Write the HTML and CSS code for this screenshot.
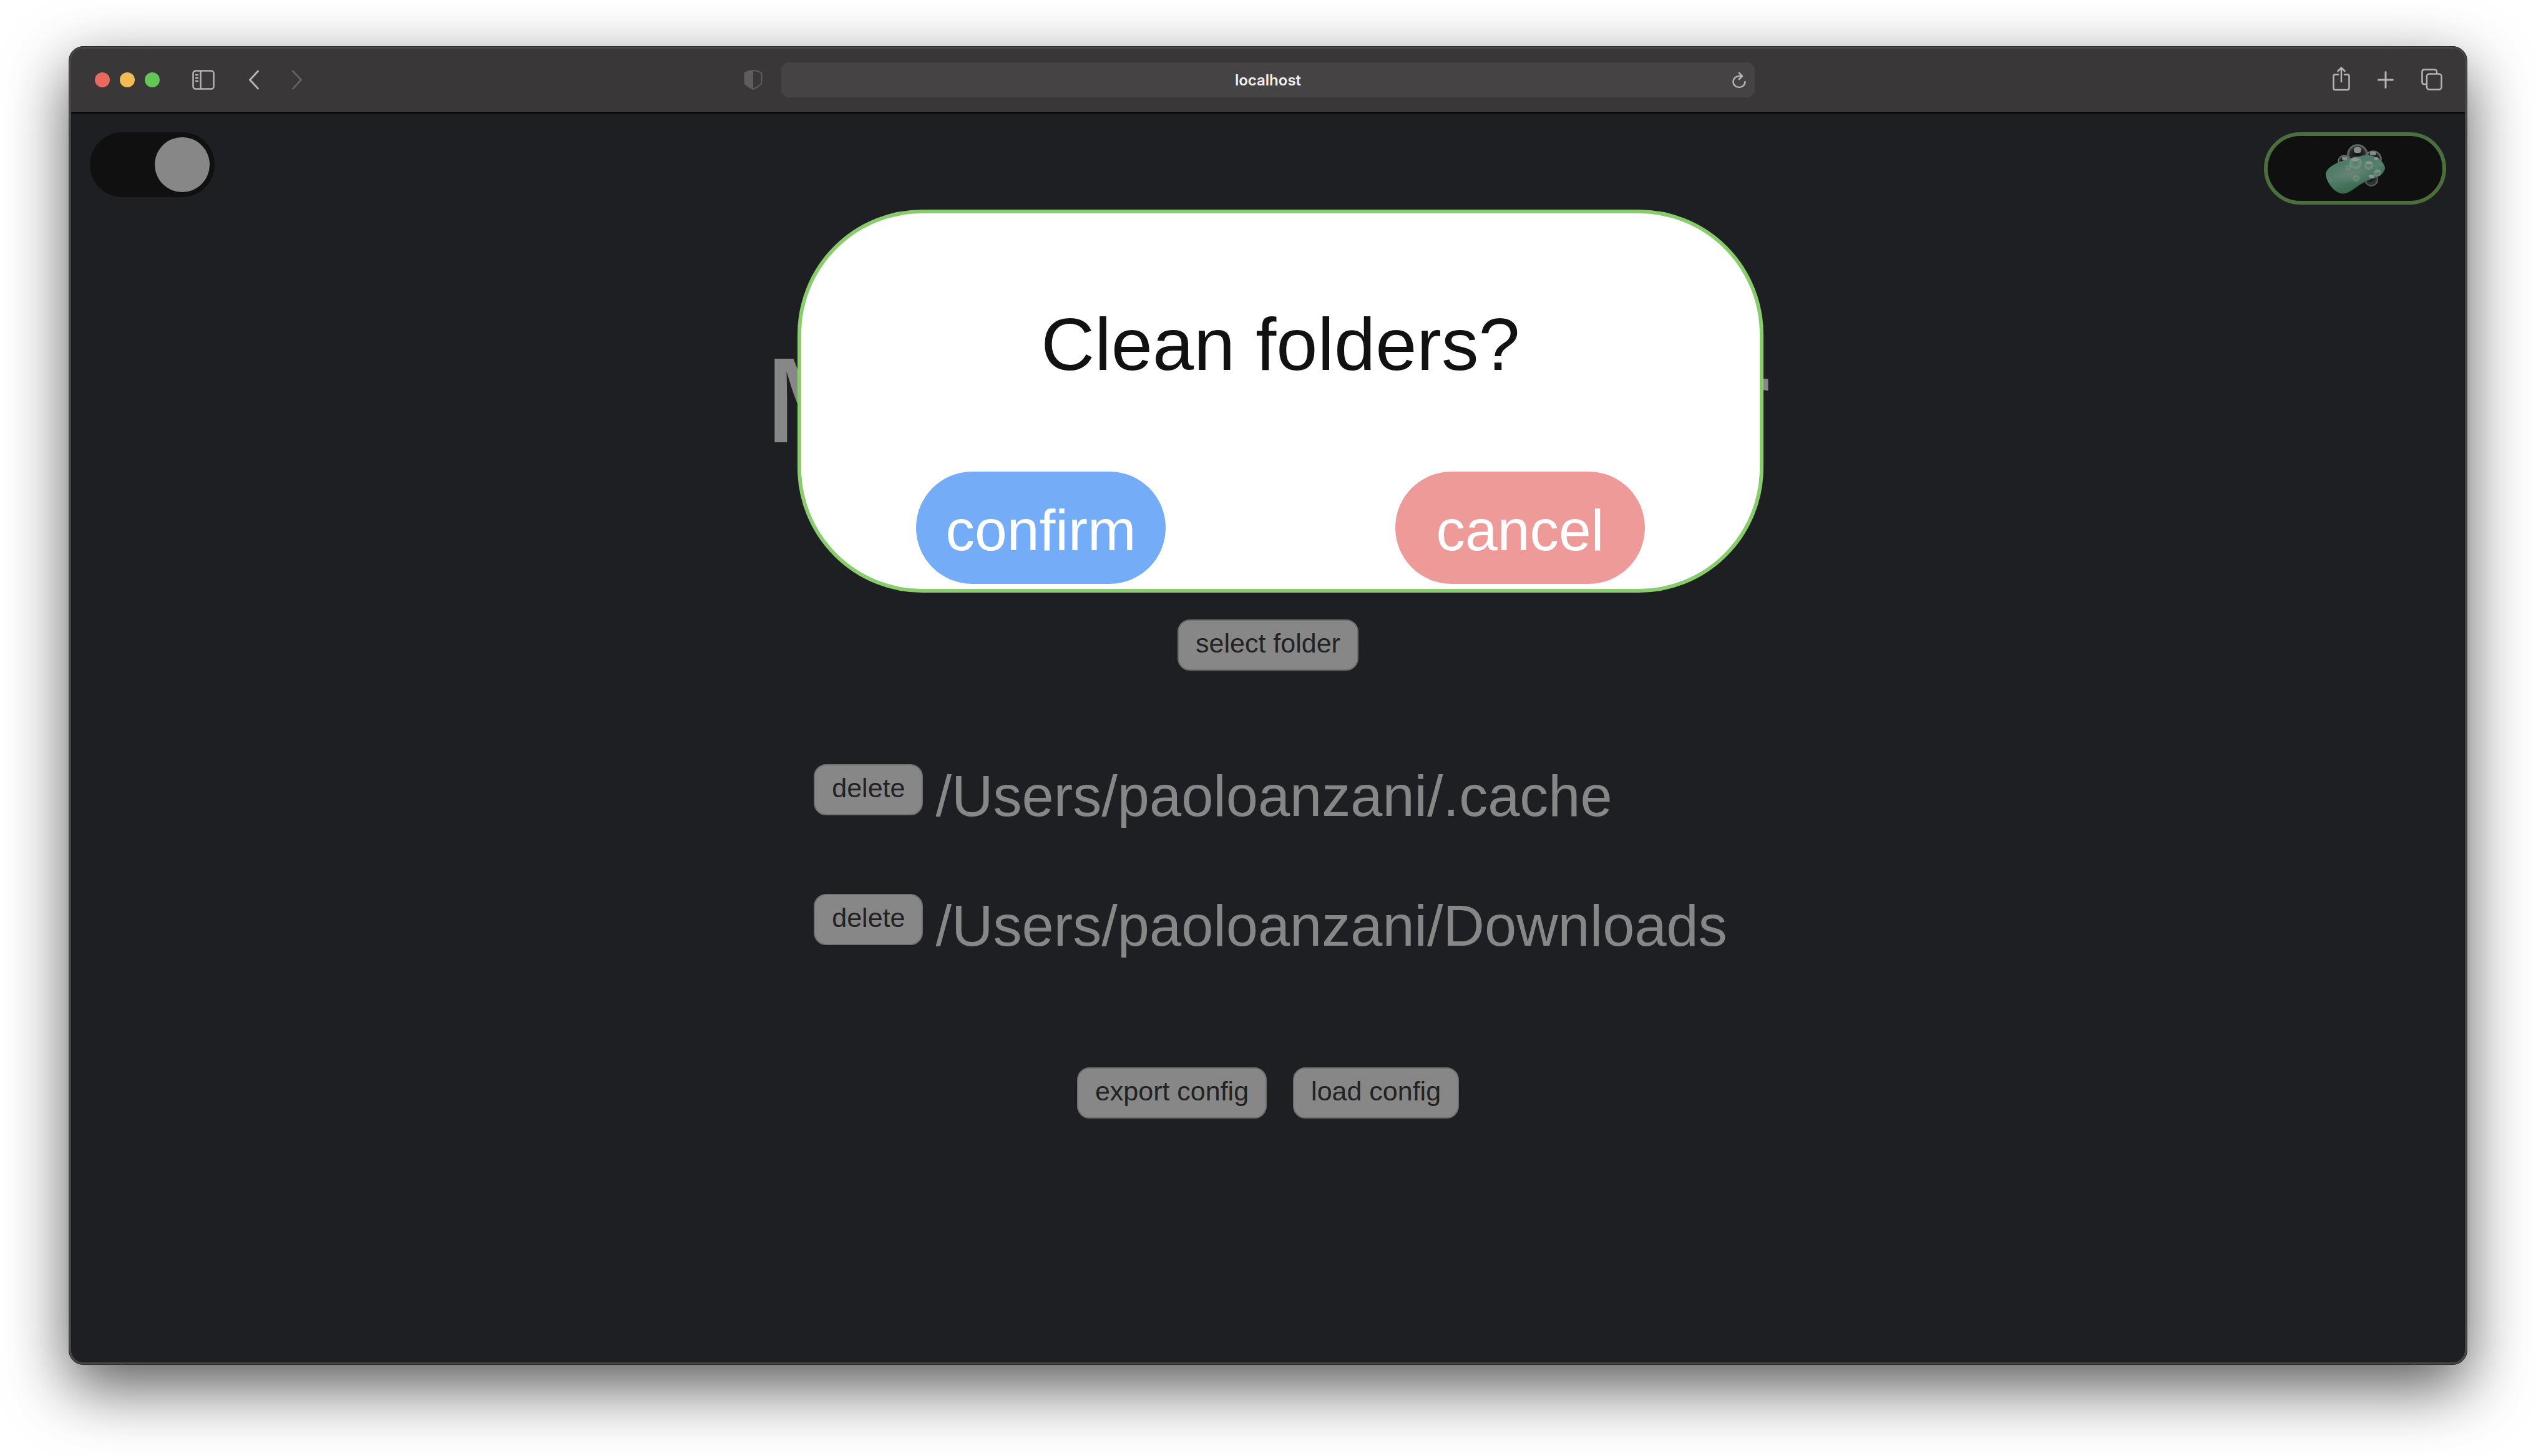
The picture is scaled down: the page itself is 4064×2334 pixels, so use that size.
FILE: index.html
```html
<!DOCTYPE html>
<html lang="en">
<head>
<meta charset="utf-8">
<meta name="viewport" content="width=device-width, initial-scale=1">
<title>localhost</title>
<link rel="stylesheet" href="styles.css">
</head>
<body>
<div class="window">
  <header class="toolbar">
    <div class="toolbar-side">
      <div class="lights">
        <button class="light light-close" aria-label="Close"></button>
        <button class="light light-min" aria-label="Minimize"></button>
        <button class="light light-zoom" aria-label="Zoom"></button>
      </div>
      <button class="tool tool-sidebar" aria-label="Show sidebar">
        <svg width="36" height="32" viewBox="0 0 36 32" fill="none" stroke="currentColor" stroke-width="2.500"><rect x="1.500" y="1.500" width="33" height="29" rx="4"/><path d="M13.500 1V31M5 8h5M5 13h5M5 18h5"/></svg>
      </button>
      <button class="tool tool-back" aria-label="Back">
        <svg width="18" height="32" viewBox="0 0 18 32" fill="none" stroke="currentColor" stroke-width="3" stroke-linecap="round" stroke-linejoin="round"><path d="M15.500 2L2.500 16L15.500 30"/></svg>
      </button>
      <button class="tool tool-forward" aria-label="Forward" disabled>
        <svg width="18" height="32" viewBox="0 0 18 32" fill="none" stroke="currentColor" stroke-width="3" stroke-linecap="round" stroke-linejoin="round"><path d="M2.500 2L15.500 16L2.500 30"/></svg>
      </button>
    </div>
    <div class="toolbar-center">
      <button class="tool tool-shield" aria-label="Privacy report">
        <svg width="30" height="32" viewBox="0 0 30 32"><path d="M15 1C11 1 5 3 1.500 5V20C1.500 24 9 28 15 31C21 28 28.500 24 28.500 20V5C25 3 19 1 15 1Z" fill="none" stroke="currentColor" stroke-width="2"/><path d="M15 1C11 1 5 3 1 5V20C1 24 9 28 15 31Z" fill="currentColor"/></svg>
      </button>
      <div class="address">
        <input class="address-input" type="text" value="localhost" aria-label="Address">
        <button class="tool tool-reload" aria-label="Reload">
          <svg width="22" height="30" viewBox="0 -4 22 30" fill="none" stroke="currentColor" stroke-width="2.500" stroke-linecap="round" stroke-linejoin="round"><path d="M20.500 14A9.500 9 0 1 1 11 5H15M11 0L16 5L11 10"/></svg>
        </button>
      </div>
    </div>
    <div class="toolbar-side toolbar-end">
      <button class="tool" aria-label="Share">
        <svg width="28" height="42" viewBox="0 0 28 42" fill="none" stroke="currentColor" stroke-width="2.500" stroke-linecap="round" stroke-linejoin="round"><path d="M9 12.500H4Q1.500 12.500 1.500 15V33.500Q1.500 37 4 37H24Q26.500 37 26.500 33.500V15Q26.500 12.500 24 12.500H19M14 24V2M8.500 7L14 1.500L19.500 7"/></svg>
      </button>
      <button class="tool" aria-label="New tab">
        <svg width="26" height="28" viewBox="0 0 26 28" fill="none" stroke="currentColor" stroke-width="3" stroke-linecap="round"><path d="M1.500 14H24.500M13 1.500V26.500"/></svg>
      </button>
      <button class="tool" aria-label="Tab overview">
        <svg width="34" height="36" viewBox="0 0 34 36" fill="none" stroke="currentColor" stroke-width="2.500" stroke-linejoin="round"><rect x="9" y="8.500" width="23.500" height="25" rx="4"/><path d="M9 25H5Q1.500 25 1.500 21.500V5Q1.500 1.500 5 1.500H21Q25 1.500 25 5V8"/></svg>
      </button>
    </div>
  </header>
  <div class="page">
    <div class="page-top">
      <label class="switch"><input class="switch-input" type="checkbox" checked aria-label="Dark mode"></label>
      <button class="soap" aria-label="Clean folders">
        <svg class="soap-icon" width="96" height="80" viewBox="0 0 96 80">
          <defs>
            <linearGradient id="bar" x1="0" y1="0" x2="0.5" y2="1"><stop offset="0" stop-color="#437a60"/><stop offset="0.55" stop-color="#567f6c"/><stop offset="1" stop-color="#2f6446"/></linearGradient>
            <radialGradient id="glow"><stop offset="0" stop-color="#6d8478" stop-opacity="0.8"/><stop offset="1" stop-color="#6d8478" stop-opacity="0"/></radialGradient>
            <radialGradient id="bubble"><stop offset="0" stop-color="#222625" stop-opacity="0.3"/><stop offset="0.7" stop-color="#3a403e" stop-opacity="0.5"/><stop offset="1" stop-color="#74827c" stop-opacity="0.9"/></radialGradient>
            <radialGradient id="drop"><stop offset="0" stop-color="#5d8371" stop-opacity="0.3"/><stop offset="1" stop-color="#839a8f" stop-opacity="0.7"/></radialGradient>
          </defs>
          <g fill="url(#bubble)" stroke="#66746d" stroke-width="1.500"><circle cx="52" cy="18" r="16"/><circle cx="77" cy="25" r="13"/><circle cx="31" cy="29" r="10"/><circle cx="74" cy="58" r="10"/></g>
          <path d="M2 45C10 30 40 24 62 19C80 16 96 30 96 40C94 50 84 54 72 58C54 64 46 76 33 80C16 84 1 60 1 49Z" fill="url(#bar)"/>
          <ellipse cx="42" cy="49" rx="30" ry="16" fill="url(#glow)"/>
          <g fill="url(#drop)"><circle cx="49" cy="31" r="10"/><circle cx="70" cy="35" r="7"/><circle cx="50" cy="56" r="5"/><circle cx="37" cy="39" r="4"/><circle cx="84" cy="47" r="6"/></g>
          <path d="M65 60Q74 65 84 53Q83 68 74 68Q66 68 65 60Z" fill="#343a38" opacity="0.6"/>
          <g fill="#929795" opacity="0.9"><rect x="46" y="6" width="12" height="9" rx="4"/><rect x="72" y="13" width="10" height="6" rx="3"/><rect x="27" y="21" width="9" height="6" rx="3"/><ellipse cx="48" cy="26" rx="6" ry="3"/><ellipse cx="70" cy="31" rx="5" ry="2"/><ellipse cx="82" cy="24" rx="4" ry="2"/><rect x="70" y="50" width="9" height="5" rx="2"/><ellipse cx="84" cy="45" rx="4" ry="1.500"/></g>
        </svg>
      </button>
    </div>
    <main class="content">
      <h1 class="title">My Folder Cleaner</h1>
      <button class="btn">select folder</button>
      <ul class="folders">
        <li class="folder"><button class="btn">delete</button><span class="path">/Users/paoloanzani/.cache</span></li>
        <li class="folder"><button class="btn">delete</button><span class="path">/Users/paoloanzani/Downloads</span></li>
      </ul>
      <div class="config"><button class="btn">export config</button><button class="btn">load config</button></div>
    </main>
    <div class="overlay">
      <div class="modal" role="dialog" aria-modal="true" aria-labelledby="ask">
        <p class="modal-text" id="ask">Clean folders?</p>
        <div class="modal-actions">
          <button class="choice choice-confirm">confirm</button>
          <button class="choice choice-cancel">cancel</button>
        </div>
      </div>
    </div>
  </div>
</div>
</body>
</html>
```
FILE: styles.css
```css
* { box-sizing: border-box; }
body {
  margin: 0;
  min-height: 100vh;
  padding: 74px 110px 146px;
  display: flex;
  background: #fff;
  font-family: "Liberation Sans", Arial, sans-serif;
}
button { font: inherit; margin: 0; padding: 0; border: 0; background: none; }
svg { display: block; }
.window {
  flex: 1;
  display: flex;
  flex-direction: column;
  border: 4px solid #474849;
  border-radius: 24px;
  outline: 1px solid #2c2c2c;
  outline-offset: -1px;
  overflow: hidden;
  background: #1e1f23;
  box-shadow: 0 36px 100px rgba(0, 0, 0, 0.65);
}
.toolbar {
  height: 104px;
  padding: 0 36px 2px 38px;
  display: grid;
  grid-template-columns: 1fr auto 1fr;
  align-items: center;
  background: #3a3739;
  border-bottom: 2px solid #000;
  color: #b5b3b5;
}
.toolbar-side { display: flex; align-items: center; }
.toolbar-end { justify-content: flex-end; gap: 44px; }
.lights { display: flex; gap: 16px; }
.light { width: 24px; height: 24px; border-radius: 50%; }
.light-close { background: #e9695e; }
.light-min { background: #f2bd50; }
.light-zoom { background: #64c656; }
.tool { color: inherit; }
.tool-sidebar { margin-left: 52px; }
.tool-back { margin-left: 54px; }
.tool-forward { margin-left: 51px; color: #626062; }
.toolbar-center { display: flex; align-items: center; gap: 30px; margin-left: -62px; }
.tool-shield { color: #5f5d5f; }
.address {
  width: 1560px;
  height: 56px;
  padding: 0 14px;
  display: grid;
  grid-template-columns: 22px 1fr 22px;
  align-items: center;
  border-radius: 12px;
  background: #464344;
}
.address-input {
  grid-column: 2;
  min-width: 0;
  border: 0;
  padding: 2px 0 0;
  background: none;
  color: #f0f0f0;
  font: 600 24px/32px Inter, "Liberation Sans", sans-serif;
  text-align: center;
}
.page { position: relative; flex: 1; }
.page-top { padding: 30px; display: flex; justify-content: space-between; align-items: flex-start; }
.switch { display: flex; }
.switch-input {
  appearance: none;
  width: 200px;
  height: 104px;
  margin: 0;
  padding: 8px;
  display: flex;
  border-radius: 52px;
  background: #101010;
}
.switch-input::before { content: ""; width: 88px; height: 88px; border-radius: 50%; background: #878787; }
.switch-input:checked::before { margin-left: auto; }
.soap {
  width: 292px;
  height: 116px;
  display: grid;
  place-items: center;
  border: 6px solid #4a6f3c;
  border-radius: 58px;
  background: #101010;
}
.soap-icon { overflow: visible; }
.content { display: flex; flex-direction: column; align-items: center; }
.title {
  margin: 172px 0 239px;
  font-family: Inter, "Liberation Sans", sans-serif;
  font-size: 184px;
  line-height: 224px;
  font-weight: 500;
  color: #878787;
  white-space: nowrap;
}
.btn {
  height: 82px;
  padding: 0 27px 6px;
  border: 2px solid #6f6f6f;
  border-radius: 20px;
  background: #878787;
  color: #222;
  font-size: 43px;
  line-height: 52px;
  white-space: nowrap;
}
.folders { list-style: none; margin: 150px 0 196px 8px; padding: 0; display: grid; gap: 126px; }
.folder { display: flex; gap: 20px; height: 82px; }
.path { font-size: 92px; line-height: 102px; color: #878787; white-space: nowrap; }
.config { display: flex; gap: 42px; }
.overlay {
  position: absolute;
  inset: 0;
  padding: 154px 0 0 40px;
  display: flex;
  justify-content: center;
  align-items: flex-start;
}
.modal {
  width: 1548px;
  padding: 132px 184px 8px;
  border: 6px solid #89cc6c;
  border-radius: 200px;
  background: #fff;
}
.modal-text { margin: 0 0 126px; font-size: 119px; line-height: 156px; color: #111; text-align: center; white-space: nowrap; }
.modal-actions { display: flex; justify-content: space-between; }
.choice {
  width: 400px;
  height: 180px;
  padding-top: 8px;
  border-radius: 90px;
  color: #fff;
  font-size: 93px;
  line-height: 112px;
}
.choice-confirm { background: #75acf7; }
.choice-cancel { background: #ed9a98; }
```
